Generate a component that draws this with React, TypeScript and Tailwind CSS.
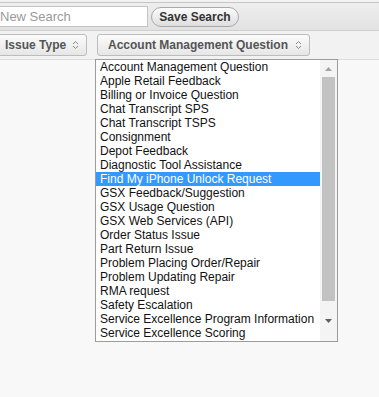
const items = [
  "Account Management Question",
  "Apple Retail Feedback",
  "Billing or Invoice Question",
  "Chat Transcript SPS",
  "Chat Transcript TSPS",
  "Consignment",
  "Depot Feedback",
  "Diagnostic Tool Assistance",
  "Find My iPhone Unlock Request",
  "GSX Feedback/Suggestion",
  "GSX Usage Question",
  "GSX Web Services (API)",
  "Order Status Issue",
  "Part Return Issue",
  "Problem Placing Order/Repair",
  "Problem Updating Repair",
  "RMA request",
  "Safety Escalation",
  "Service Excellence Program Information",
  "Service Excellence Scoring",
];

function UpDown() {
  return (
    <svg width="7" height="10" viewBox="0 0 7 10" className="shrink-0">
      <path d="M1 4 L3.5 1.5 L6 4" fill="none" stroke="#8a8a8a" strokeWidth="1" />
      <path d="M1 6 L3.5 8.5 L6 6" fill="none" stroke="#8a8a8a" strokeWidth="1" />
    </svg>
  );
}

export default function App() {
  return (
    <div className="w-[379px] h-[397px] overflow-hidden bg-[#f8f8f8] font-['Liberation_Sans',Arial,sans-serif]">
      <div className="h-[2px] bg-[#f2f2f2]" />
      <div className="h-[29px] border-t border-[#c6c6c6] border-b border-b-[#d0d0d0] bg-gradient-to-b from-[#eeeeee] to-[#e2e2e2] flex items-center gap-[3px]">
        <div className="w-[158px] h-[21px] ml-[-10px] bg-white border border-[#c4c4c4] flex items-center pl-[9px] text-[13px] text-[#9a9a9a]">
          New Search
        </div>
        <button className="w-[88px] h-[20px] rounded-full border border-[#a9a9a9] bg-gradient-to-b from-[#fbfbfb] to-[#dedede] text-[12px] font-bold text-[#333] flex items-center justify-center">
          Save Search
        </button>
      </div>
      <div className="h-[29px] bg-[#f2f2f2] border-b border-[#dcdcdc] flex items-center">
        <div className="w-[97px] h-[22px] ml-[-10px] rounded-[3px] border border-[#bcbcbc] bg-gradient-to-b from-[#fbfbfb] to-[#e6e6e6] flex items-center justify-between pl-[14px] pr-[7px] text-[12px] font-bold text-[#555]">
          <span>Issue Type</span>
          <UpDown />
        </div>
        <div className="w-[213px] h-[22px] ml-[10px] rounded-[3px] border border-[#bcbcbc] bg-gradient-to-b from-[#fbfbfb] to-[#e6e6e6] flex items-center justify-between pl-[10px] pr-[7px] text-[12px] font-bold text-[#555]">
          <span>Account Management Question</span>
          <UpDown />
        </div>
      </div>
      <div className="ml-[95px] mt-[-1px] w-[243px] h-[283px] bg-white border border-[#9c9c9c] flex">
        <div className="flex-1 flex flex-col">
          {items.map((t) => (
            <div
              key={t}
              className={
                "h-[14px] leading-[14px] pl-[4px] text-[12px] whitespace-nowrap " +
                (t === "Find My iPhone Unlock Request" ? "bg-[#3399ff] text-white" : "text-[#111]")
              }
            >
              {t}
            </div>
          ))}
        </div>
        <div className="w-[17px] bg-[#f4f4f4] flex flex-col items-center">
          <div className="h-[17px] flex items-center justify-center">
            <svg width="7" height="4" viewBox="0 0 7 4">
              <path d="M0 4 L3.5 0 L7 4 Z" fill="#a3a3a3" />
            </svg>
          </div>
          <div className="w-[13px] h-[224px] bg-[#c2c2c2]" />
          <div className="flex-1 flex items-center justify-center">
            <svg width="7" height="4" viewBox="0 0 7 4">
              <path d="M0 0 L7 0 L3.5 4 Z" fill="#606060" />
            </svg>
          </div>
        </div>
      </div>
    </div>
  );
}
